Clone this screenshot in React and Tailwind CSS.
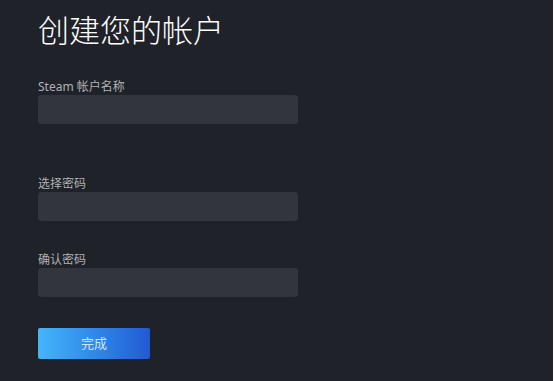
import React from "react";

function Field({ label, type = "text", className = "" }) {
  return (
    <div className={"flex flex-col " + className}>
      <label className="text-[12px] leading-[16px] text-[#afb1b4]">{label}</label>
      <input
        type={type}
        className="h-[29px] w-[260px] rounded-[3px] bg-[#32353c] px-2 text-[13px] text-white outline-none"
      />
    </div>
  );
}

export default function App() {
  return (
    <div
      className="flex h-[381px] w-[555px] bg-white"
      style={{ fontFamily: '"Noto Sans", "Noto Sans CJK SC", sans-serif' }}
    >
      <div className="flex w-[553px] flex-col bg-[#1f2228] pl-[38px] pt-[10px]">
        <h1 className="text-[31px] font-light leading-[40px] text-white">创建您的帐户</h1>
        <Field label="Steam 帐户名称" className="mt-[29px]" />
        <Field label="选择密码" type="password" className="mt-[52px]" />
        <Field label="确认密码" type="password" className="mt-[31px]" />
        <button className="mt-[31px] h-[31px] w-[112px] rounded-[2px] bg-gradient-to-r from-[#45b6fb] to-[#2459d3] text-[13px] text-[#d2e4f7]">
          完成
        </button>
      </div>
    </div>
  );
}
